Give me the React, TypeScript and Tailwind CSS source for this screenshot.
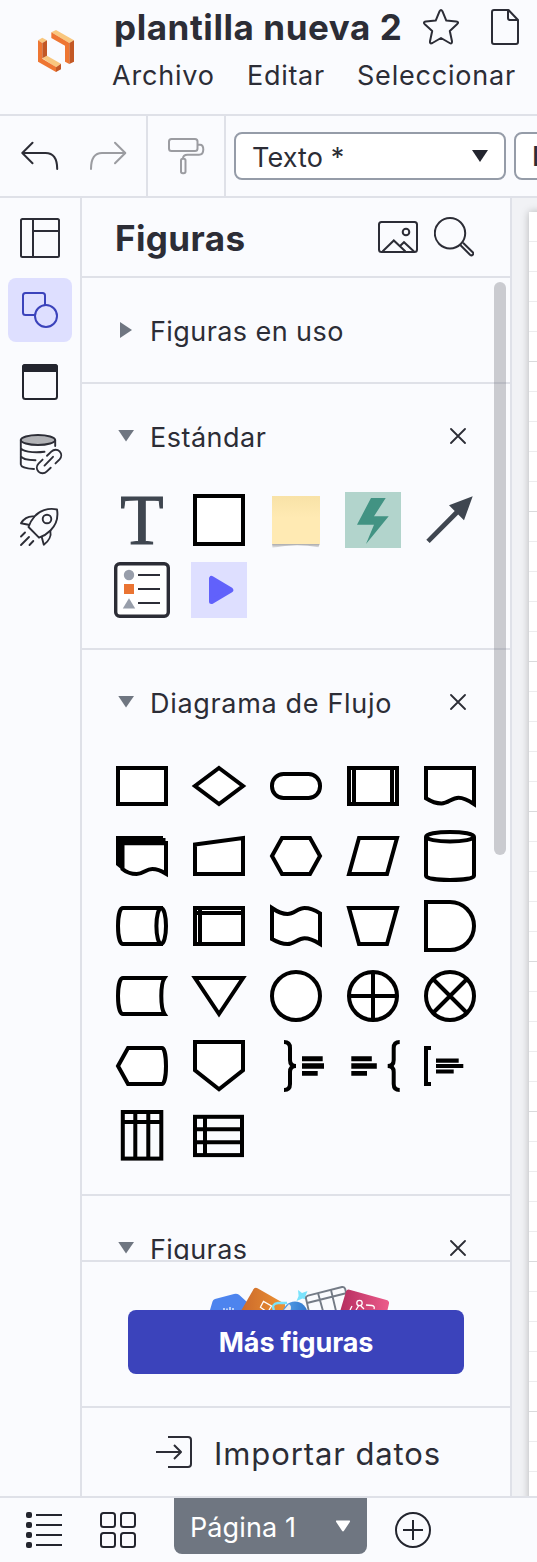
import type { ReactNode } from 'react';

function Shape({ children, label }: { children: ReactNode; label: string }) {
  return (
    <svg aria-label={label} className="block size-14" viewBox="0 0 56 56" fill="#fff" stroke="#000" strokeWidth="4">
      {children}
    </svg>
  );
}

function CloseIcon() {
  return (
    <svg className="block size-4" viewBox="0 0 16 16" fill="none" stroke="#2c2d36" strokeWidth="1.8" strokeLinecap="round">
      <path d="M1 1L15 15M15 1L1 15" />
    </svg>
  );
}

function SectionTitle({ title, tracking, open = true }: { title: string; tracking: string; open?: boolean }) {
  return (
    <div className="flex h-[104px] shrink-0 items-center pl-9 pr-11">
      <svg className="block size-4 shrink-0" viewBox="0 0 16 16" fill="#6f7681">
        {open ? <path d="M0.3 2H16L8 13.6Z" /> : <path d="M2 0V16L14 8Z" />}
      </svg>
      <span className={`ml-[16px] mt-1 flex-1 whitespace-nowrap text-[27px] leading-8 ${tracking}`}>{title}</span>
      {open && <CloseIcon />}
    </div>
  );
}

function Logo() {
  return (
    <svg className="block h-[42px] w-9" viewBox="114 90 108 126">
      <path fill="#f9c77e" d="M114 121L127 113L141 121L127 129ZM127 175L141 167L183 191L168 202ZM154 97L168 90L222 121L208 129Z" />
      <path fill="#ee7632" d="M114 121L127 129V176L168 201V216L114 185ZM154 97L208 129V192L195 185V137L154 114Z" />
      <path fill="#c35825" d="M127 129L141 121V167L127 175ZM168 202L183 191V208L168 216ZM208 129L222 121V185L208 192Z" />
    </svg>
  );
}

function Header() {
  return (
    <header className="flex h-[116px] shrink-0 border-b-2 border-[#dfe1e8]">
      <div className="w-[113px] shrink-0 pl-[38px] pt-[30px]">
        <Logo />
      </div>
      <div className="shrink-0">
        <div className="flex h-[54px] items-center">
          <h1 className="w-[308px] whitespace-nowrap pl-px text-[35px] font-bold leading-10 tracking-[0.58px]">plantilla nueva 2</h1>
          <svg className="block h-9 w-10" viewBox="421 7 40 36" fill="none" stroke="#2c2d36" strokeWidth="2" strokeLinejoin="round">
            <path d="M439.6 9.2Q441 6.8 442.4 9.2L446.3 18.6L456.2 19.6Q459.6 20 457 22.3L449.8 29L452 39.2Q452.2 42.5 449.6 41L441 36L432.4 41Q429.5 42.3 430 39.2L432.2 29L424.8 22.3Q422.6 20.2 425.8 19.6L435.7 18.6Z" />
          </svg>
          <svg className="ml-[30px] block h-9 w-7" viewBox="0 0 28 36" fill="none" stroke="#2c2d36" strokeWidth="2" strokeLinejoin="round">
            <path d="M3 1H17.5L27 11V33Q27 35 25 35H3Q1 35 1 33V3Q1 1 3 1ZM17 1V9Q17 11 19 11H27" />
          </svg>
        </div>
        <nav className="flex h-11 items-center whitespace-nowrap text-[27px] leading-8">
          <span className="-ml-px w-[135px] tracking-[0.8px]">Archivo</span>
          <span className="w-[110px] tracking-[0.7px]">Editar</span>
          <span className="tracking-[0.8px]">Seleccionar</span>
        </nav>
      </div>
    </header>
  );
}

function Toolbar() {
  return (
    <div className="flex h-[82px] shrink-0 border-b-2 border-[#dfe1e8]">
      <div className="flex w-[148px] shrink-0 items-center border-r-2 border-[#dfe1e8] pl-[21px]">
        <svg className="block h-8 w-10" viewBox="21.5 140 40 32" fill="none" stroke="#2c2d36" strokeWidth="2" strokeLinecap="round" strokeLinejoin="round">
          <path d="M33 142.7L22.8 153L33 163.3M23 153H46Q57.7 153 57.7 169" />
        </svg>
        <svg className="ml-[27px] block h-8 w-10" viewBox="88 140 40 32" fill="none" stroke="#9b9ca1" strokeWidth="2" strokeLinecap="round" strokeLinejoin="round">
          <path d="M115 142.7L125.3 153L115 163.3M125 153H102Q91 153 91 169" />
        </svg>
      </div>
      <div className="flex w-[78px] shrink-0 items-center border-r-2 border-[#dfe1e8] pl-[18px]">
        <svg className="block h-10 w-10" viewBox="166 136 40 40" fill="none" stroke="#9b9ca1" strokeWidth="2">
          <rect x="169" y="139" width="28.5" height="12" rx="2.5" />
          <path d="M197.5 144.7H200Q203.3 144.7 203.3 149.5Q203.3 154.7 199 154.7H187.5Q183 154.7 183 158.5" />
          <rect x="181" y="158.7" width="4.5" height="14.6" rx="1.8" />
        </svg>
      </div>
      <div className="flex flex-1 items-center gap-2 overflow-hidden pl-2">
        <button className="flex h-12 w-[272px] shrink-0 items-center justify-between rounded-lg border-2 border-[#959ca8] bg-white pl-4 pr-4 text-[27px] leading-8">
          <span className="mt-1 tracking-[0.1px]">Texto *</span>
          <svg className="block h-3 w-4" viewBox="0 0 16 12" fill="#23252e"><path d="M0 0H16L8 12Z" /></svg>
        </button>
        <button className="flex h-12 w-[200px] shrink-0 items-center rounded-lg border-2 border-[#959ca8] bg-white pl-4 text-[27px] leading-8">
          <span className="mt-0.5 font-medium">L</span>
        </button>
      </div>
    </div>
  );
}

function Rail() {
  const base = 'flex size-16 shrink-0 rounded-lg';
  return (
    <aside className="flex w-[82px] shrink-0 flex-col gap-2 border-r-2 border-[#dfe1e8] pl-2 pt-2">
      <button className={base}>
        <svg className="block size-16" viewBox="0 0 64 64" fill="none" stroke="#2c2d36" strokeWidth="2">
          <rect x="13" y="13" width="38" height="38" rx="1.5" />
          <path d="M25 13V51M25 25H51" />
        </svg>
      </button>
      <button className={`${base} bg-[#dedfff]`}>
        <svg className="block size-16" viewBox="0 0 64 64" fill="#dedfff" stroke="#3b43bb" strokeWidth="2">
          <rect x="15" y="15" width="22" height="22" rx="2.5" />
          <circle cx="38" cy="38" r="11" />
        </svg>
      </button>
      <button className={base}>
        <svg className="block size-16" viewBox="0 0 64 64" fill="none" stroke="#23252e" strokeWidth="2">
          <rect x="15" y="15" width="34" height="34" rx="2.5" />
          <path d="M14 22V17Q14 14 17 14H47Q50 14 50 17V22Z" fill="#23252e" stroke="none" />
        </svg>
      </button>
      <button className={base}>
        <svg className="block size-16" viewBox="0 0 64 64" fill="none" stroke="#2c2d36" strokeWidth="1.9" strokeLinecap="round">
          <ellipse cx="30" cy="18" rx="17.2" ry="5" fill="#b1b2b6" />
          <path d="M12.8 18V42.5C13 45 19 46.7 26 47M47.2 18V24M12.8 26C13.5 29 24 31.3 36.5 29.8M12.8 34C13.5 36.5 20 38.2 27.5 38.3" />
          <path d="M39 33.8L43.3 29.6C46 27 49.6 27.3 51.6 29.4C53.7 31.6 53.8 35 51.6 37.3L47.5 41.4M34.6 37.6L30.5 41.7C28.3 44 28.3 47.3 30.5 49.6C32.8 51.8 36.4 51.8 38.6 49.6L42.7 45.7M45 34.8L36.5 43.6" />
        </svg>
      </button>
      <button className={base}>
        <svg className="block size-16" viewBox="0 0 64 64" fill="none" stroke="#2c2d36" strokeWidth="1.9" strokeLinecap="round" strokeLinejoin="round">
          <path d="M49 15.5C40 13.5 31 17 26.5 22.5C23.5 26 21.5 29.5 20.5 33L31 43.7C34.5 42.5 39 40 42.5 36.5C48.5 30.5 50.5 24 49 15.5Z" />
          <circle cx="39" cy="25" r="4.3" />
          <path d="M26.2 22.5C20 21.5 15 25.5 13 29.3L20.5 30.8M42.3 37C43.5 41.5 41 47 35.8 50.8L33.8 43.3M13 42.5L17 38.5M13 51L21 43M21.5 51L25.3 47" />
        </svg>
      </button>
    </aside>
  );
}

function StandardShapes() {
  return (
    <div className="grid grid-cols-[repeat(5,56px)] gap-x-[21px] gap-y-[14px] pl-8 pt-1">
      <div className="flex size-14 items-center justify-center text-[#3f4650]">
        <span className="font-['Liberation_Serif',serif] text-[71px] leading-[56px] [-webkit-text-stroke:1px_#3f4650]">T</span>
      </div>
      <Shape label="Bloque"><rect x="4" y="4" width="48" height="48" /></Shape>
      <svg className="block size-14" viewBox="0 0 56 56">
        <defs>
          <linearGradient id="note" x1="0" y1="0" x2="0" y2="1">
            <stop offset="0" stopColor="#f8e2a7" />
            <stop offset="0.45" stopColor="#ffeab3" />
          </linearGradient>
          <linearGradient id="noteShade" x1="0" y1="0" x2="0" y2="1">
            <stop offset="0" stopColor="#9a9a9c" />
            <stop offset="1" stopColor="#e6e7e9" />
          </linearGradient>
        </defs>
        <path d="M4 51H52L50.5 55.3Q28 51 4.5 55.8Z" fill="url(#noteShade)" />
        <rect x="4" y="4" width="48" height="48" fill="url(#note)" />
      </svg>
      <svg className="block size-14 bg-[#b2d4cc]" viewBox="0 0 56 56" fill="#429383">
        <path d="M26 6H40.7L29 24.3H43.7L21 52L29 32.7H12Z" />
      </svg>
      <svg className="block size-14" viewBox="0 0 56 56" fill="#3f4650">
        <path d="M50.7 4.3L42 28.3L36.2 22.5L7.7 51L4.3 47.7L32.7 19L27 13.3Z" />
      </svg>
      <svg className="block size-14" viewBox="0 0 56 56">
        <rect x="1.7" y="1.7" width="52.6" height="52.6" rx="4" fill="#fff" stroke="#2c2d36" strokeWidth="3.4" />
        <circle cx="15" cy="13" r="5.2" fill="#989eaa" />
        <path d="M10 22H20V32H10Z" fill="#ea7432" />
        <path d="M15 36.3L21.2 46.6H8.8Z" fill="#989eaa" />
        <path d="M24 13H46M24 27H46M24 41H46" stroke="#2c2d36" strokeWidth="2" />
      </svg>
      <svg className="block size-14 bg-[#dedfff]" viewBox="0 0 56 56">
        <path d="M20.5 16.5V39.5L39.8 28Z" fill="#6161fb" stroke="#6161fb" strokeWidth="5" strokeLinejoin="round" />
      </svg>
    </div>
  );
}

function FlowShapes() {
  return (
    <div className="grid grid-cols-[repeat(5,56px)] gap-x-[21px] gap-y-[14px] pl-8 pt-1">
      <Shape label="Proceso"><rect x="4" y="10" width="48" height="36" /></Shape>
      <Shape label="Decisión"><path d="M28 10L52 28L28 46L4 28Z" /></Shape>
      <Shape label="Terminador"><rect x="4" y="16" width="48" height="24" rx="11.5" /></Shape>
      <Shape label="Proceso predefinido">
        <rect x="4" y="10" width="48" height="36" />
        <path d="M9 10V46M47 10V46" />
      </Shape>
      <Shape label="Documento">
        <path d="M4 10H52V46C46 42 41 39.7 36.5 39.7C30 39.7 26 45.5 19.5 45.5C14 45.5 9 43.5 4 40.3Z" />
      </Shape>
      <Shape label="Documentos múltiples">
        <path d="M2 8H49V10H51.5V13H54V20H12V45L2 37Z" fill="#000" stroke="none" />
        <path d="M8.5 15.3H52V45.7C46 42 42 41 38.3 41C32 41 29 46 22.7 46C17 46 12 44 8.5 41Z" />
      </Shape>
      <Shape label="Entrada manual"><path d="M4 16.5L52 10V46H4Z" /></Shape>
      <Shape label="Preparación"><path d="M4 28L14 10H42L52 28L42 46H14Z" /></Shape>
      <Shape label="Datos"><path d="M14 10H52L42 46H4Z" /></Shape>
      <Shape label="Base de datos">
        <path d="M4 9V47.7C4 50.3 14.7 52 28 52S52 50.3 52 47.7V9" />
        <ellipse cx="28" cy="8.7" rx="24" ry="4.8" />
      </Shape>
      <Shape label="Acceso directo">
        <path d="M9 10C6 10 4 18 4 28S6 46 9 46H47V10Z" />
        <ellipse cx="47.2" cy="28" rx="4.8" ry="18" />
      </Shape>
      <Shape label="Almacenamiento interno">
        <rect x="4" y="10" width="48" height="36" />
        <path d="M4 15H52M9 10V46" />
      </Shape>
      <Shape label="Cinta de papel">
        <path d="M4 10C9 13.5 14 16 19.5 16C26 16 30 10 36.5 10C41 10 47 12 52 15.3V46C47 43 42 40.3 36.5 40.3C30 40.3 26 46 19.5 46C14 46 9 44 4 41Z" />
      </Shape>
      <Shape label="Operación manual"><path d="M4 10H52L42 46H14Z" /></Shape>
      <Shape label="Retraso"><path d="M4 4H28A24 24 0 0 1 28 52H4Z" /></Shape>
      <Shape label="Datos almacenados">
        <path d="M9 10H50.5C48.5 13 47.3 19 47.3 28S48.5 43 50.5 46H9C6 46 4 38 4 28S6 10 9 10Z" />
      </Shape>
      <Shape label="Combinar"><path d="M4 10H52L28 46Z" /></Shape>
      <Shape label="Conector"><circle cx="28" cy="28" r="24" /></Shape>
      <Shape label="O">
        <circle cx="28" cy="28" r="24" />
        <path d="M28 4V52M4 28H52" />
      </Shape>
      <Shape label="Unión">
        <circle cx="28" cy="28" r="24" />
        <path d="M11 11L45 45M45 11L11 45" />
      </Shape>
      <Shape label="Pantalla"><path d="M4 28L14 10H48C50.3 10 52 18 52 28S50.3 46 48 46H14Z" /></Shape>
      <Shape label="Enlace fuera de página"><path d="M4 4H52V32.3L28 51.3L4 32.3Z" /></Shape>
      <Shape label="Llave derecha">
        <path fill="none" d="M16 4Q22 4 22 10V22Q22 28 28 28Q22 28 22 34V46Q22 52 16 52" />
        <path stroke="none" fill="#000" d="M34 18.3H54.7V23.3H34ZM34 25.3H56V30.7H34ZM34 33H49.7V37.8H34Z" />
      </Shape>
      <Shape label="Llave izquierda">
        <path fill="none" d="M54.7 4Q48.7 4 48.7 10V22Q48.7 28 42.7 28Q48.7 28 48.7 34V46Q48.7 52 54.7 52" />
        <path stroke="none" fill="#000" d="M6.3 18.3H26.8V23.3H6.3ZM6.3 25.3H31.8V30.7H6.3ZM6.3 33H22V37.8H6.3Z" />
      </Shape>
      <Shape label="Nota">
        <path fill="none" d="M9 10H4V46H9" />
        <path stroke="none" fill="#000" d="M14 20.6H36.7V24.7H14ZM14 26H41.3V30H14ZM14 31.6H31.7V35.4H14Z" />
      </Shape>
      <Shape label="Tabla vertical">
        <rect x="8.8" y="4" width="38.5" height="46.6" fill="#fafbfe" />
        <path d="M21.3 4V50.6M34.3 4V50.6M8.8 14H47.3" />
      </Shape>
      <Shape label="Tabla horizontal">
        <rect x="4" y="8.8" width="47" height="38.3" fill="#fafbfe" />
        <path d="M4 21.3H51M4 34.3H51M14 8.8V47.1" />
      </Shape>
    </div>
  );
}

function FooterArt() {
  return (
    <svg className="block h-[26px] w-[190px]" viewBox="205 1284 190 26">
      <defs>
        <linearGradient id="orange" x1="0" x2="1"><stop offset="0" stopColor="#cb6a2c" /><stop offset="1" stopColor="#ed9233" /></linearGradient>
        <linearGradient id="pink" x1="0" x2="1"><stop offset="0" stopColor="#b62e60" /><stop offset="1" stopColor="#ec5b8b" /></linearGradient>
        <linearGradient id="ball" x1="0" x2="1"><stop offset="0" stopColor="#58a2e8" /><stop offset="1" stopColor="#2f76cd" /></linearGradient>
      </defs>
      <path fill="#4d84ee" d="M210 1310L212.5 1301.5Q213 1299.5 215 1299L234 1294Q237 1293.3 239 1294.8L247 1302V1310Z" />
      <path stroke="#fff" strokeWidth="1.2" d="M224 1308V1310M227 1308.5V1310M230 1307V1310M233 1308V1310" />
      <path fill="url(#orange)" d="M241.5 1310L253.5 1289.3Q255 1287 257.5 1288.3L285 1304V1310Z" />
      <path fill="none" stroke="#fff" strokeWidth="1.3" d="M260.5 1307L263.5 1301.5L271.5 1306L269 1310M260 1307L265 1310.5" />
      <circle cx="295" cy="1314" r="12.5" fill="url(#ball)" />
      <path fill="#eeeae6" d="M284 1310L289 1304Q292 1306 290.5 1310Z" />
      <path fill="none" stroke="#7ae3fc" strokeWidth="2.4" d="M274 1310Q271 1304 278 1303H287" />
      <path fill="#7ae3fc" d="M298 1290L302 1293L307.5 1291L305.5 1296L308 1300L302.5 1298.5L296.5 1301L298.6 1296Z" />
      <g fill="none" stroke="#747b86" strokeWidth="1.9">
        <path fill="#fafbfe" d="M309 1312L306 1298.5Q305.5 1296.3 308 1295.6L342 1287Q344.5 1286.5 345.2 1289L350 1310" />
        <path d="M307 1303L347 1293M318 1293L323 1311M331 1290L336 1311M345 1309L341 1311" />
      </g>
      <path fill="url(#pink)" d="M340.5 1310L346 1291.5Q347 1289 349.5 1289.7L386.5 1300Q389.5 1301 389 1303.5L387.5 1310Z" />
      <path fill="none" stroke="#fff" strokeWidth="1.3" d="M358.5 1306L356 1310M352 1306L350 1310M361 1306L364 1309M366 1305L372 1305.5Q375 1306 374 1309" />
      <circle cx="359.5" cy="1303" r="2.7" fill="none" stroke="#fff" strokeWidth="1.3" />
    </svg>
  );
}

function Panel() {
  return (
    <section className="flex w-[430px] shrink-0 flex-col border-r-2 border-[#dfe1e8]">
      <div className="flex h-20 shrink-0 items-center border-b-2 border-[#dfe1e8] pl-8">
        <h2 className="mt-0.5 w-[264px] pl-px text-[35px] font-bold leading-10 tracking-[0.4px]">Figuras</h2>
        <svg className="block h-8 w-10" viewBox="0 0 40 32" fill="none" stroke="#2c2d36" strokeWidth="2">
          <rect x="1" y="1" width="38" height="30" rx="2.5" />
          <circle cx="28" cy="11" r="3.3" />
          <path d="M4.5 30.5L15.8 19.5L27.5 30.5M22 25L26 21.2L36 30.5" />
        </svg>
        <svg className="ml-4 block size-10" viewBox="0 0 40 40" fill="none" stroke="#2c2d36" strokeWidth="2">
          <circle cx="16" cy="16.2" r="15.2" />
          <path d="M26.3 28L36 37.7Q37.5 39 38.7 37.7Q40 36.5 38.7 35.2L29 25.8" />
        </svg>
      </div>
      <div className="relative flex h-[982px] shrink-0 flex-col overflow-hidden">
        <div className="flex h-[106px] shrink-0 flex-col border-b-2 border-[#dfe1e8]">
          <SectionTitle title="Figuras en uso" tracking="tracking-[0.42px]" open={false} />
        </div>
        <div className="flex h-[266px] shrink-0 flex-col border-b-2 border-[#dfe1e8]">
          <SectionTitle title="Estándar" tracking="tracking-[0.5px]" />
          <StandardShapes />
        </div>
        <div className="flex h-[546px] shrink-0 flex-col border-b-2 border-[#dfe1e8]">
          <SectionTitle title="Diagrama de Flujo" tracking="tracking-[0.68px]" />
          <FlowShapes />
        </div>
        <SectionTitle title="Figuras" tracking="tracking-[0.4px]" />
        <div className="absolute right-1 top-1 h-[573px] w-3 rounded-full bg-[#6f727c]/35" />
      </div>
      <div className="flex h-[148px] shrink-0 flex-col border-y-2 border-[#dfe1e8] pt-[22px]">
        <div className="pl-[123px]"><FooterArt /></div>
        <button className="ml-[46px] flex h-16 w-[336px] items-center justify-center rounded-lg bg-[#3b43bb] pt-0.5 text-[27px] font-bold leading-8 tracking-[-0.15px] text-white">
          Más figuras
        </button>
      </div>
      <button className="flex flex-1 items-center pl-[74px]">
        <svg className="block h-8 w-9" viewBox="0 0 36 32" fill="none" stroke="#2c2d36" strokeWidth="2" strokeLinejoin="round">
          <path d="M12 1H32Q35 1 35 4V28Q35 31 32 31H12M0 16H25M18 9L25 16L18 23" />
        </svg>
        <span className="ml-[22px] mt-1 whitespace-nowrap text-[31px] leading-9 tracking-[0.9px]">Importar datos</span>
      </button>
    </section>
  );
}

function Canvas() {
  const rows = Array.from({ length: 43 }, (_, i) => i);
  return (
    <div className="flex-1 overflow-hidden bg-[#f1f2f5] pl-[17px] pt-[14px]">
      <div className="h-[1400px] w-[400px] bg-white shadow-[0_0_8px_rgba(0,0,0,0.25)]">
        {rows.map((i) => (
          <div key={i} className={`h-[30px] border-b ${i % 5 === 4 ? 'border-[#d9dadc]' : 'border-[#ececee]'}`} />
        ))}
      </div>
    </div>
  );
}

function BottomBar() {
  return (
    <footer className="flex h-[66px] shrink-0 border-t-2 border-[#dfe1e8]">
      <svg className="ml-[26px] mt-[14px] block h-9 w-9" viewBox="0 0 36 36" stroke="#23252e" strokeWidth="2">
        <path d="M10 3H36M10 13H36M10 23H36M10 33H36" />
        <g fill="#23252e" stroke="none">
          <rect y="0" width="6" height="6" rx="2" /><rect y="10" width="6" height="6" rx="2" />
          <rect y="20" width="6" height="6" rx="2" /><rect y="30" width="6" height="6" rx="2" />
        </g>
      </svg>
      <svg className="ml-[38px] mt-[14px] block h-9 w-9" viewBox="0 0 36 36" fill="none" stroke="#23252e" strokeWidth="2">
        <rect x="1" y="1" width="14" height="14" rx="2.5" /><rect x="21" y="1" width="14" height="14" rx="2.5" />
        <rect x="1" y="21" width="14" height="14" rx="2.5" /><rect x="21" y="21" width="14" height="14" rx="2.5" />
      </svg>
      <button className="ml-[38px] flex h-14 w-[193px] items-center justify-between rounded-b-lg bg-[#6f7681] pl-4 pr-4 text-[27px] leading-8 text-white">
        <span className="mt-1 tracking-[0.1px]">Página 1</span>
        <svg className="block h-3 w-4" viewBox="0 0 16 12" fill="#fff"><path d="M1.5 0.5H14.5Q15.5 1 14.8 2L9 10.8Q8 12 7 10.8L1.2 2Q0.5 1 1.5 0.5Z" /></svg>
      </button>
      <svg className="ml-7 mt-[14px] block h-9 w-9" viewBox="0 0 36 36" fill="none" stroke="#23252e" strokeWidth="2">
        <circle cx="18" cy="18" r="17" />
        <path d="M18 8V28M8 18H28" />
      </svg>
    </footer>
  );
}

export default function App() {
  return (
    <div className="flex h-[1562px] w-[537px] flex-col overflow-hidden bg-[#fafbfe] font-['Inter',sans-serif] text-[#2c2d36]">
      <Header />
      <Toolbar />
      <main className="flex min-h-0 flex-1">
        <Rail />
        <Panel />
        <Canvas />
      </main>
      <BottomBar />
    </div>
  );
}
